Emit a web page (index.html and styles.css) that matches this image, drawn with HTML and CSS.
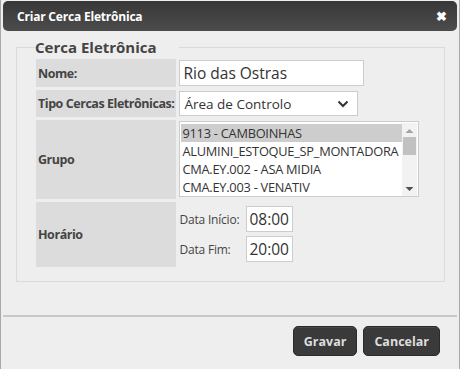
FILE: index.html
```html
<!DOCTYPE html>
<html lang="pt">
<head>
    <meta charset="UTF-8">
    <title>Criar Cerca Eletrônica</title>
    <link rel="stylesheet" href="styles.css">
</head>
<body>
    <div class="dialog">
        <div class="dialog-header">
            <span class="dialog-title">Criar Cerca Eletrônica</span>
            <span class="dialog-close">&#10006;</span>
        </div>

        <div class="dialog-body">
            <fieldset class="fence">
                <legend>Cerca Eletrônica</legend>
                <table class="form-table">
                    <tr class="row-nome">
                        <th>Nome:</th>
                        <td><div class="text-input name-input">Rio das Ostras</div></td>
                    </tr>
                    <tr class="row-tipo">
                        <th>Tipo Cercas Eletrônicas:</th>
                        <td>
                            <div class="select-box">
                                <span>Área de Controlo</span>
                                <svg width="12" height="8" viewBox="0 0 12 8"><path d="M1.5 1.5 L6 6 L10.5 1.5" fill="none" stroke="#333" stroke-width="2"/></svg>
                            </div>
                        </td>
                    </tr>
                    <tr class="row-grupo">
                        <th>Grupo</th>
                        <td>
                            <div class="listbox">
                                <ul class="list-items">
                                    <li class="selected">9113 - CAMBOINHAS</li>
                                    <li>ALUMINI_ESTOQUE_SP_MONTADORA</li>
                                    <li>CMA.EY.002 - ASA MIDIA</li>
                                    <li>CMA.EY.003 - VENATIV</li>
                                </ul>
                                <div class="scrollbar">
                                    <svg width="9" height="6" viewBox="0 0 9 6"><path d="M0.5 5 L4.5 1 L8.5 5 Z" fill="#a3a3a3"/></svg>
                                    <div class="scroll-track"><div class="scroll-thumb"></div></div>
                                    <svg width="9" height="6" viewBox="0 0 9 6"><path d="M0.5 1 L4.5 5 L8.5 1 Z" fill="#505050"/></svg>
                                </div>
                            </div>
                        </td>
                    </tr>
                    <tr class="row-horario">
                        <th>Horário</th>
                        <td>
                            <div class="time-row">
                                <span class="time-label">Data Início:</span>
                                <div class="text-input time-input">08:00</div>
                            </div>
                            <div class="time-row">
                                <span class="time-label">Data Fim:</span>
                                <div class="text-input time-input">20:00</div>
                            </div>
                        </td>
                    </tr>
                </table>
            </fieldset>
        </div>

        <div class="dialog-footer">
            <button class="btn">Gravar</button>
            <button class="btn">Cancelar</button>
        </div>
    </div>
</body>
</html>
```

FILE: styles.css
```css
* {
    margin: 0;
    padding: 0;
    box-sizing: border-box;
}

body {
    font-family: "Open Sans", "Noto Sans", Arial, sans-serif;
    background: #fff;
    color: #444;
    width: 462px;
    height: 369px;
    overflow: hidden;
}

.dialog {
    width: 460px;
    height: 380px;
    background: #eee;
    border: 1px solid #a8a8a8;
    border-top: none;
    padding: 1px 2px 0 2px;
}

.dialog-header {
    height: 30px;
    background: linear-gradient(#383838, #4c4c4c);
    border-radius: 5px;
    display: flex;
    align-items: center;
    justify-content: space-between;
    padding: 0 10px 0 14px;
    color: #fff;
}

.dialog-title {
    font-size: 12px;
    font-weight: bold;
    letter-spacing: -0.2px;
}

.dialog-close {
    font-size: 13px;
    font-weight: bold;
}

.dialog-body {
    padding: 6px 12px 0 13px;
    height: 286px;
    border-bottom: 2px solid #c8c8c8;
}

.fence {
    border: 1px solid #dadada;
    height: 245px;
    padding: 0 0 0 19px;
}

.fence legend {
    padding: 0 3px;
    font-size: 15px;
    font-weight: bold;
    color: #444;
    position: relative;
    left: -19px;
    margin-left: 15px;
}

.form-table {
    border-collapse: separate;
    border-spacing: 0 3px;
    margin-top: -1px;
}

.form-table th {
    width: 139px;
    background: #dcdcdc;
    text-align: left;
    font-size: 12.5px;
    font-weight: bold;
    letter-spacing: -0.45px;
    color: #444;
    padding: 0 2px;
    white-space: nowrap;
}

.form-table td {
    padding: 1px 0 1px 3px;
    vertical-align: top;
}

.row-nome th { height: 27px; }
.row-tipo th { height: 26px; }
.row-grupo th { height: 79px; }
.row-horario th { height: 63px; }

.text-input {
    background: #fff;
    border: 1px solid #ccc;
    color: #333;
    font-size: 15.5px;
    line-height: 24px;
    padding: 0 3px;
}

.name-input {
    width: 185px;
    height: 26px;
}

.select-box {
    width: 179px;
    height: 25px;
    background: #fff;
    border: 1px solid #ccc;
    display: flex;
    align-items: center;
    justify-content: space-between;
    padding: 0 8px 0 4px;
    font-size: 13.5px;
    color: #333;
}

.listbox {
    width: 240px;
    height: 76px;
    background: #fff;
    border: 1px solid #ccc;
    display: flex;
    padding: 1px 1px 0 1px;
}

.list-items {
    list-style: none;
    flex: 1;
    overflow: hidden;
    font-size: 12.8px;
    color: #333;
    line-height: 18px;
    padding-top: 1px;
}

.list-items li {
    white-space: nowrap;
    padding-left: 1px;
    letter-spacing: -0.25px;
}

.list-items li.selected {
    background: #cdcdcd;
}

.scrollbar {
    width: 15px;
    display: flex;
    flex-direction: column;
    align-items: center;
    justify-content: space-between;
    padding: 5px 0 4px;
    background: #f2f2f2;
}

.scroll-track {
    flex: 1;
    width: 100%;
    padding: 3px 0 0 0;
}

.scroll-thumb {
    height: 18px;
    background: #c1c1c1;
    margin: 0 1px;
}

.time-row {
    display: flex;
    align-items: center;
    margin-top: 3px;
    margin-bottom: 4px;
}

.time-row + .time-row {
    margin-top: 0;
}

.time-label {
    width: 67px;
    font-size: 12px;
    letter-spacing: -0.2px;
    color: #444;
}

.time-input {
    width: 47px;
    height: 26px;
    padding: 0 2px;
}

.dialog-footer {
    display: flex;
    justify-content: flex-end;
    gap: 6px;
    padding: 9px 17px 0 0;
}

.btn {
    background: #3a3a3a;
    border: 1px solid #2a2a2a;
    border-radius: 5px;
    color: #ddd;
    font-family: inherit;
    font-weight: bold;
    font-size: 12.5px;
    height: 30px;
    padding: 0 10px;
    box-shadow: inset 0 1px 0 rgba(255,255,255,0.08);
}
```
